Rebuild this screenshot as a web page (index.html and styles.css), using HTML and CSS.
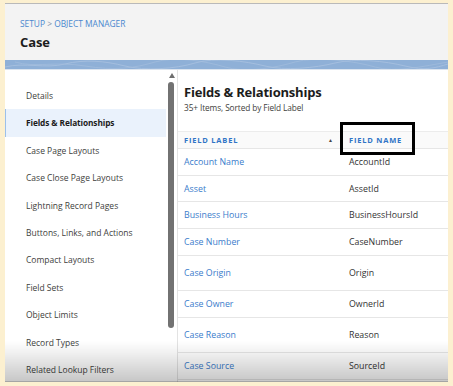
FILE: index.html
```html
<!DOCTYPE html>
<html>
<head>
<meta charset="utf-8">
<link rel="stylesheet" href="styles.css">
</head>
<body>
<div class="frame">
  <div class="header">
    <div class="crumb"><span class="crumb-link">SETUP</span> <span class="crumb-sep">&gt;</span> <span class="crumb-link">OBJECT MANAGER</span></div>
    <div class="obj-title">Case</div>
  </div>
  <div class="band">
    <svg class="band-art" width="443" height="9" viewBox="0 0 443 9" preserveAspectRatio="none">
      <path d="M0 7 C20 2 40 9 60 4 S100 1 120 6 S170 9 190 3 S240 1 260 6 S310 8 330 3 S380 1 400 6 S430 8 443 4" fill="none" stroke="#a9c2e0" stroke-width="0.8"/>
      <path d="M10 2 C30 8 50 1 80 6 S130 8 150 2 S200 1 220 7 S270 8 290 2 S350 1 370 7 S420 6 443 2" fill="none" stroke="#a3bddc" stroke-width="0.7"/>
    </svg>
  </div>
  <div class="body">
    <nav class="sidebar">
      <div class="nav-item">Details</div>
      <div class="nav-item active">Fields &amp; Relationships</div>
      <div class="nav-item">Case Page Layouts</div>
      <div class="nav-item">Case Close Page Layouts</div>
      <div class="nav-item">Lightning Record Pages</div>
      <div class="nav-item">Buttons, Links, and Actions</div>
      <div class="nav-item">Compact Layouts</div>
      <div class="nav-item">Field Sets</div>
      <div class="nav-item">Object Limits</div>
      <div class="nav-item">Record Types</div>
      <div class="nav-item">Related Lookup Filters</div>
    </nav>
    <div class="scroll">
      <div class="scroll-arrow"></div>
      <div class="scroll-thumb"></div>
    </div>
    <main class="main">
      <div class="main-head">
        <div class="main-title">Fields &amp; Relationships</div>
        <div class="main-sub">35+ Items, Sorted by Field Label</div>
      </div>
      <div class="table">
        <div class="row head-row">
          <div class="cell c1 th">FIELD LABEL<span class="sort">&#9650;</span></div>
          <div class="cell c2 th"><span class="boxed">FIELD NAME</span></div>
        </div>
        <div class="row"><div class="cell c1 link">Account Name</div><div class="cell c2">AccountId</div></div>
        <div class="row short"><div class="cell c1 link">Asset</div><div class="cell c2">AssetId</div></div>
        <div class="row"><div class="cell c1 link">Business Hours</div><div class="cell c2">BusinessHoursId</div></div>
        <div class="row"><div class="cell c1 link">Case Number</div><div class="cell c2">CaseNumber</div></div>
        <div class="row tall"><div class="cell c1 link">Case Origin</div><div class="cell c2">Origin</div></div>
        <div class="row"><div class="cell c1 link">Case Owner</div><div class="cell c2">OwnerId</div></div>
        <div class="row tall"><div class="cell c1 link">Case Reason</div><div class="cell c2">Reason</div></div>
        <div class="row"><div class="cell c1 link">Case Source</div><div class="cell c2">SourceId</div></div>
      </div>
    </main>
  </div>
  <div class="fade"></div>
</div>
</body>
</html>
```

FILE: styles.css
```css
html, body {
  margin: 0;
  padding: 0;
}
body {
  background: #fcf0d0;
  width: 453px;
  height: 386px;
  overflow: hidden;
  font-family: "Open Sans", "Noto Sans", sans-serif;
}
.frame {
  position: relative;
  margin: 3px 5px 0 5px;
  height: 378px;
  background: #ffffff;
  overflow: hidden;
  border-top: 1px solid #b9b9b9;
}
.header {
  height: 56px;
  background: #f3f3f3;
  padding-left: 15px;
  box-sizing: border-box;
  padding-top: 15px;
}
.crumb {
  font-size: 8.4px;
  line-height: 10px;
  color: #4a88cf;
  letter-spacing: 0;
}
.crumb-sep {
  color: #7a8ea6;
}
.obj-title {
  margin-top: 5px;
  font-size: 13px;
  line-height: 16px;
  font-weight: 700;
  color: #1c1c1c;
  letter-spacing: -0.1px;
}
.band {
  height: 9px;
  background: #8fb0d7;
  border-bottom: 1px solid #dce4ee;
  overflow: hidden;
}
.band-art {
  display: block;
}
.body {
  display: flex;
  height: 312px;
}
.sidebar {
  width: 161px;
  padding-top: 12px;
  flex: none;
}
.nav-item {
  height: 27.4px;
  line-height: 27.4px;
  padding-left: 21px;
  font-size: 8.5px;
  color: #3e3e3c;
  box-sizing: border-box;
  white-space: nowrap;
}
.nav-item.active {
  background: #eaf2fc;
  border-left: 1px solid #9cc0ea;
  padding-left: 20px;
  font-weight: 700;
  font-size: 8.3px;
  color: #1c1c1c;
  letter-spacing: -0.1px;
}
.scroll {
  width: 11px;
  flex: none;
  position: relative;
  border-right: 1px solid #e3e3e3;
}
.scroll-arrow {
  margin: 3px 0 0 3px;
  width: 0;
  height: 0;
  border-left: 3px solid transparent;
  border-right: 3px solid transparent;
  border-bottom: 5px solid #6e6e6e;
}
.scroll-thumb {
  margin: 4px 0 0 2px;
  width: 6px;
  height: 246px;
  background: #727272;
  border-radius: 3px;
}
.main {
  flex: 1;
  min-width: 0;
}
.main-head {
  padding: 14px 0 0 6px;
  height: 61px;
  box-sizing: border-box;
}
.main-title {
  font-size: 13px;
  line-height: 16px;
  font-weight: 700;
  color: #1c1c1c;
  letter-spacing: -0.2px;
}
.main-sub {
  margin-top: 2px;
  font-size: 8.3px;
  line-height: 11px;
  color: #3e3e3c;
  letter-spacing: -0.1px;
}
.table {
  display: flex;
  flex-direction: column;
}
.row {
  display: flex;
  height: 27px;
  align-items: center;
  border-bottom: 1px solid #e6e6e6;
  box-sizing: border-box;
}
.row.short { height: 26px; }
.row.tall { height: 35px; }
.head-row {
  height: 18px;
  background: #fafafa;
  border-top: 1px solid #ececec;
}
.cell {
  font-size: 8.8px;
  white-space: nowrap;
}
.c1 {
  width: 171px;
  padding-left: 6px;
  box-sizing: border-box;
  display: flex;
  align-items: center;
}
.c2 {
  flex: 1;
  color: #333333;
}
.link {
  color: #3a7ccb;
}
.th {
  font-size: 7.5px;
  font-weight: 700;
  color: #2f74c6;
  letter-spacing: 0.8px;
}
.sort {
  margin-left: auto;
  margin-right: 16px;
  font-size: 5px;
  color: #444;
  letter-spacing: 0;
}
.boxed {
  position: relative;
}
.boxed::after {
  content: "";
  position: absolute;
  left: -9px;
  top: -13px;
  width: 69px;
  height: 27px;
  border: 3px solid #000;
}
.fade {
  position: absolute;
  left: 0;
  right: 0;
  bottom: 0;
  height: 40px;
  background: linear-gradient(to bottom, rgba(0,0,0,0) 0%, rgba(0,0,0,0.06) 30%, rgba(0,0,0,0.22) 100%);
  border-bottom: 1px solid rgba(0,0,0,0.35);
  pointer-events: none;
}
```
